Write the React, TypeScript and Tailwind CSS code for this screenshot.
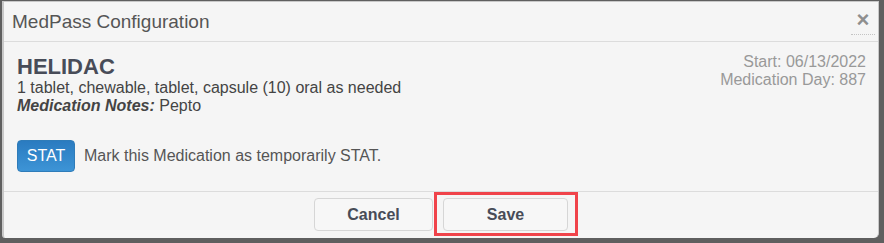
import React from 'react';

export default function App() {
  return (
    <div className="w-[884px] h-[243px] bg-[#5f5f5f] pt-px pl-[2px] pr-[5px] pb-[5px] flex font-['Liberation_Sans',Arial,sans-serif]">
      <div className="flex-1 flex flex-col bg-[#f5f5f5] border-l-2 border-t border-r border-[#c8c8c8] rounded-br-[5px] rounded-bl-[3px]">
        {/* header */}
        <div className="h-[40px] border-b border-[#dcdcdc] flex items-center justify-between pl-[8px] pr-[4px]">
          <h2 className="text-[19px] leading-[22px] text-[#555]">MedPass Configuration</h2>
          <button className="relative w-[22px] h-[22px] flex items-center justify-center text-[#8f8f8f] text-[22px] font-bold leading-none -mt-[4px]">
            ×
            <span className="absolute left-[-1px] right-[-1px] bottom-[-4px] border-b border-dotted border-[#c4c4c4]" />
          </button>
        </div>

        {/* body */}
        <div className="pt-[13px] pl-[13px] pr-[12px] pb-[19px]">
          <div className="flex justify-between">
            <div>
              <div className="text-[22px] leading-[24px] font-bold text-[#484c58]">HELIDAC</div>
              <div className="text-[16px] leading-[18px] text-[#444]">1 tablet, chewable, tablet, capsule (10) oral as needed</div>
              <div className="text-[16px] leading-[18px] text-[#444]">
                <span className="font-bold italic">Medication Notes:</span> Pepto
              </div>
            </div>
            <div className="text-right text-[16px] leading-[18px] text-[#999] -mt-[2px]">
              <div>Start: 06/13/2022</div>
              <div>Medication Day: 887</div>
            </div>
          </div>

          <div className="mt-[25px] flex items-center gap-[9px]">
            <button className="w-[58px] h-[32px] rounded-[4px] bg-gradient-to-b from-[#2a7bc0] to-[#3d94d6] border border-[#2f7cb9] text-white text-[16px]">
              STAT
            </button>
            <span className="text-[16px] text-[#555]">Mark this Medication as temporarily STAT.</span>
          </div>
        </div>

        {/* footer */}
        <div className="border-t border-[#dcdcdc] flex-1 flex justify-center items-start pt-[6px] gap-[10px]">
          <button className="w-[119px] h-[33px] rounded-[4px] border border-[#d6d6d6] bg-[#f7f7f7] text-[16px] font-bold text-[#484c58]">
            Cancel
          </button>
          <div className="relative">
            <button className="w-[125px] h-[33px] rounded-[4px] border border-[#d6d6d6] bg-[#f7f7f7] text-[16px] font-bold text-[#484c58]">
              Save
            </button>
            <div className="absolute left-[-9px] top-[-6px] w-[144px] h-[44px] border-[3px] border-[#f0434a]" />
          </div>
        </div>
      </div>
    </div>
  );
}
